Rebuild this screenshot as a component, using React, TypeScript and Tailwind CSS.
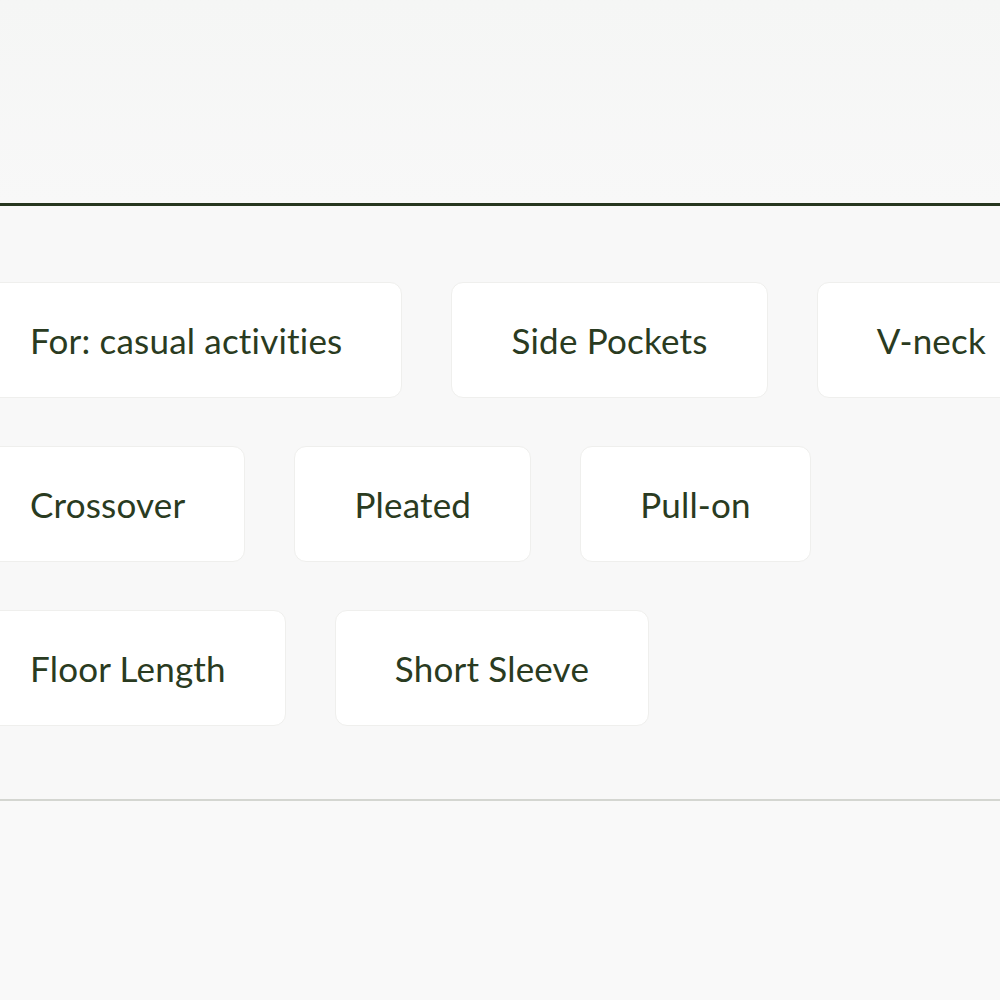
import React from "react";

const rows = [
  ["For: casual activities", "Side Pockets", "V-neck"],
  ["Crossover", "Pleated", "Pull-on"],
  ["Floor Length", "Short Sleeve"],
];

function Chip({ label }: { label: string }) {
  return (
    <div className="flex h-[116px] shrink-0 items-center whitespace-nowrap rounded-[12px] border border-[#efefed] bg-white px-[59px] text-[35px] tracking-[0.2px] text-[#2a3b21] [font-variant-ligatures:none]">
      {label}
    </div>
  );
}

export default function App() {
  return (
    <div
      className="flex h-[1000px] w-[1000px] flex-col overflow-hidden bg-[#f6f6f5]"
      style={{ fontFamily: "Lato, 'Open Sans', sans-serif" }}
    >
      <div className="h-[203px] bg-gradient-to-b from-[#f5f6f5] to-[#f8f8f8]" />
      <div className="border-t-[3px] border-b-2 border-t-[#26361e] border-b-[#d4d6d1] bg-[#f8f8f8] pt-[76px] pb-[73px]">
        <div className="-ml-[30px] flex flex-col gap-[48px]">
          {rows.map((row, i) => (
            <div key={i} className="flex gap-[49px]">
              {row.map((label) => (
                <Chip key={label} label={label} />
              ))}
            </div>
          ))}
        </div>
      </div>
      <div className="flex-1 bg-[#f9f9f9]" />
    </div>
  );
}
